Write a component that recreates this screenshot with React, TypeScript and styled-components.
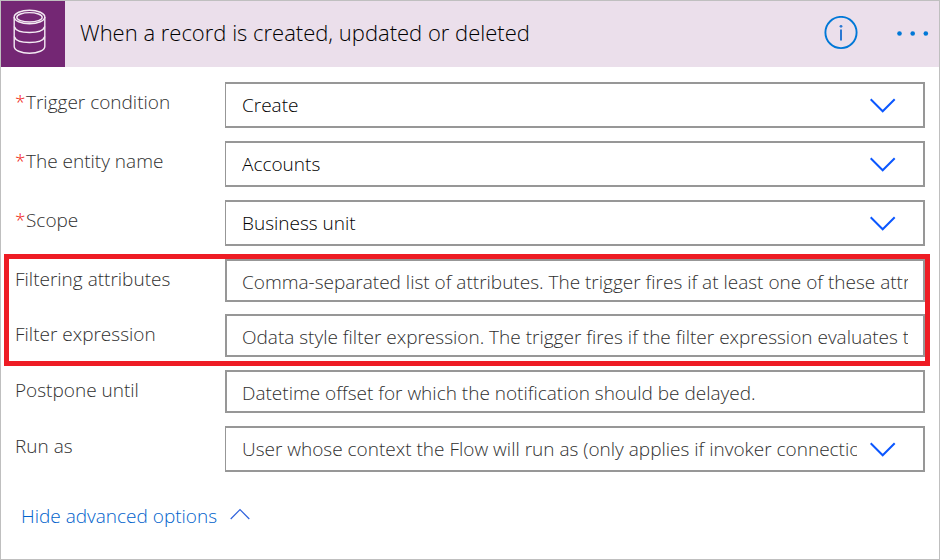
import React from 'react';
import styled, { createGlobalStyle } from 'styled-components';

const GlobalStyle = createGlobalStyle`
  *, *::before, *::after { box-sizing: border-box; }
  body {
    margin: 0;
    background: #ffffff;
    font-family: "Open Sans", "Noto Sans", sans-serif;
    font-size: 19px;
    font-weight: 300;
    color: #303030;
  }
  button, input, select { font: inherit; }
`;

const Card = styled.main`
  display: flex;
  flex-direction: column;
  min-height: 100vh;
  border: 1px solid #bfbfbf;
`;

const Header = styled.header`
  display: flex;
  align-items: stretch;
  height: 66px;
  background: #ebdfeb;
`;

const Brand = styled.div`
  flex: none;
  width: 64px;
  background: #742774;
  svg { display: block; }
`;

const Title = styled.h1`
  flex: 1;
  margin: 0;
  padding-left: 15px;
  font-size: 22px;
  font-weight: inherit;
  line-height: 62px;
  color: #000000;
  white-space: nowrap;
`;

const HeaderActions = styled.div`
  display: flex;
  align-items: center;
  gap: 37px;
  padding: 0 10px 3px 0;
`;

const IconButton = styled.button`
  display: block;
  padding: 0;
  border: 0;
  background: none;
  cursor: pointer;
  svg { display: block; }
`;

const Form = styled.form`
  display: flex;
  flex-direction: column;
  gap: 13px;
  padding: 15px 14px 0;
`;

const Row = styled.div`
  display: grid;
  grid-template-columns: 210px minmax(0, 1fr);
  align-items: start;
`;

const Label = styled.label`
  line-height: 40px;
  white-space: nowrap;
`;

const Required = styled.span`
  display: inline-block;
  width: 11px;
  color: #f0140c;
  font-size: 19px;
`;

const Highlight = styled.section`
  display: flex;
  flex-direction: column;
  gap: 12px;
  margin: 0 0 -4px -6px;
  padding: 0 0 4px 6px;
  outline: 5px solid #ee1c24;
`;

const SelectBox = styled.div`
  display: grid;
  align-items: center;
  > * { grid-area: 1 / 1; }
  svg {
    justify-self: end;
    margin-right: 29px;
    pointer-events: none;
  }
`;

const Select = styled.select<{ $muted?: boolean }>`
  appearance: none;
  width: 100%;
  height: 46px;
  margin: 0;
  padding: 0 66px 0 16px;
  border: 2px solid #979797;
  border-left-width: 1px;
  border-radius: 0;
  background: #ffffff;
  color: ${({ $muted }) => ($muted ? '#303030' : '#000000')};
  text-overflow: clip;
`;

const TextInput = styled.input`
  width: 100%;
  height: 43px;
  margin: 0;
  padding: 3px 15px 0 15px;
  border: 2px solid #979797;
  border-radius: 0;
  background: #ffffff;
  &::placeholder { color: #303030; opacity: 1; }
`;

const AdvancedLink = styled.a`
  display: flex;
  align-items: center;
  align-self: flex-start;
  gap: 13px;
  margin: 32px 0 0 20px;
  line-height: 24px;
  color: #0062cc;
  text-decoration: none;
`;

const DatabaseIcon = () => (
  <svg width="64" height="66" viewBox="0 0 64 66" fill="none" stroke="#f3eaf3" strokeWidth="1.4" aria-hidden="true">
    <ellipse cx="28.5" cy="16" rx="15.3" ry="6.7" />
    <ellipse cx="28.5" cy="16.3" rx="12.7" ry="4.7" />
    <path d="M13.2 16v29.5c0 3.6 6.8 6.8 15.3 6.8s15.3-3.2 15.3-6.8V16" />
    <path d="M13.2 25.5c1.2 3.8 7.3 6 15.3 6s14.1-2.2 15.3-6" />
    <path d="M13.2 35.5c1.2 3.8 7.3 6 15.3 6s14.1-2.2 15.3-6" />
  </svg>
);

const InfoIcon = () => (
  <svg width="34" height="34" viewBox="0 0 34 34" fill="none" aria-hidden="true">
    <circle cx="17" cy="16.5" r="15.6" stroke="#0078d7" strokeWidth="1.9" />
    <circle cx="17" cy="10.3" r="1.4" fill="#2a78d2" />
    <path d="M17 13.5v11" stroke="#2a78d2" strokeWidth="2" />
  </svg>
);

const MoreIcon = () => (
  <svg width="34" height="34" viewBox="0 0 34 34" fill="#0078d7" aria-hidden="true">
    <circle cx="4.5" cy="17.5" r="2.3" />
    <circle cx="17.7" cy="17.5" r="2.3" />
    <circle cx="30.8" cy="17.5" r="2.3" />
  </svg>
);

const ChevronDown = () => (
  <svg width="26" height="16" viewBox="0 0 26 16" fill="none" stroke="#0b57ff" strokeWidth="2" aria-hidden="true">
    <path d="M.7 2.3l12 12 12-12" />
  </svg>
);

const ChevronUp = () => (
  <svg width="20" height="16" viewBox="0 0 20 16" fill="none" stroke="#2f62dc" strokeWidth="1.2" aria-hidden="true">
    <path d="M.7 11l9.3-9.3L19.3 11" />
  </svg>
);

type FieldProps = { id: string; label: string; text: string; required?: boolean; muted?: boolean };

const FieldLabel = ({ id, label, required }: Pick<FieldProps, 'id' | 'label' | 'required'>) => (
  <Label htmlFor={id}>
    {required && <Required aria-hidden="true">*</Required>}
    {label}
  </Label>
);

const SelectField = ({ id, label, text, required, muted }: FieldProps) => (
  <Row>
    <FieldLabel id={id} label={label} required={required} />
    <SelectBox>
      <Select id={id} required={required} $muted={muted}>
        <option>{text}</option>
      </Select>
      <ChevronDown />
    </SelectBox>
  </Row>
);

const TextField = ({ id, label, text }: FieldProps) => (
  <Row>
    <FieldLabel id={id} label={label} />
    <TextInput id={id} type="text" placeholder={text} />
  </Row>
);

export default function App() {
  return (
    <>
      <GlobalStyle />
      <Card>
        <Header>
          <Brand><DatabaseIcon /></Brand>
          <Title>When a record is created, updated or deleted</Title>
          <HeaderActions>
            <IconButton type="button" aria-label="Information"><InfoIcon /></IconButton>
            <IconButton type="button" aria-label="More options"><MoreIcon /></IconButton>
          </HeaderActions>
        </Header>
        <Form>
          <SelectField id="trigger" label="Trigger condition" text="Create" required />
          <SelectField id="entity" label="The entity name" text="Accounts" required />
          <SelectField id="scope" label="Scope" text="Business unit" required />
          <Highlight>
            <TextField
              id="attributes"
              label="Filtering attributes"
              text="Comma-separated list of attributes. The trigger fires if at least one of these attributes changes."
            />
            <TextField
              id="expression"
              label="Filter expression"
              text="Odata style filter expression. The trigger fires if the filter expression evaluates to true."
            />
          </Highlight>
          <TextField
            id="postpone"
            label="Postpone until"
            text="Datetime offset for which the notification should be delayed."
          />
          <SelectField
            id="runas"
            label="Run as"
            text="User whose context the Flow will run as (only applies if invoker connections are used)."
            muted
          />
        </Form>
        <AdvancedLink href="#advanced">
          Hide advanced options
          <ChevronUp />
        </AdvancedLink>
      </Card>
    </>
  );
}
